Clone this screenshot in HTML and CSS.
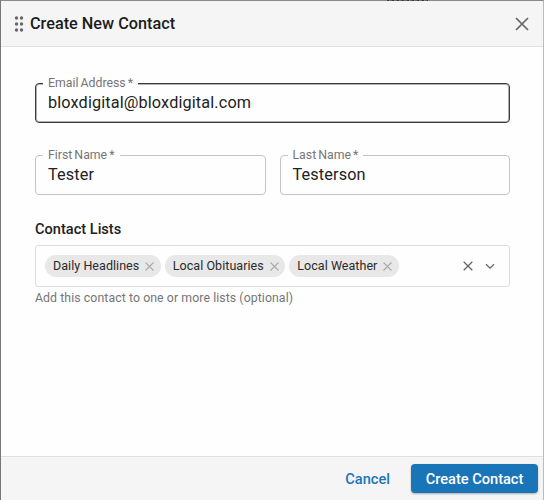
FILE: index.html
```html
<!DOCTYPE html>
<html lang="en">
<head>
<meta charset="utf-8">
<title>Create New Contact</title>
<link rel="stylesheet" href="styles.css">
</head>
<body>
<div class="backdrop-peek"></div>
<div class="dialog">
  <header class="header">
    <div class="title-group">
      <svg class="drag" width="10" height="16" viewBox="0 0 10 16"><g fill="#666"><circle cx="2.500" cy="2" r="1.700"/><circle cx="7.500" cy="2" r="1.700"/><circle cx="2.500" cy="8" r="1.700"/><circle cx="7.500" cy="8" r="1.700"/><circle cx="2.500" cy="14" r="1.700"/><circle cx="7.500" cy="14" r="1.700"/></g></svg>
      <h1 class="title">Create New Contact</h1>
    </div>
    <svg class="close" width="14" height="14" viewBox="0 0 14 14"><path d="M1 1L13 13M13 1L1 13" stroke="#666" stroke-width="1.7" fill="none"/></svg>
  </header>
  <main class="body">
    <div class="field focused">
      <span class="legend">Email Address *</span>
      <span class="value">bloxdigital@bloxdigital.com</span>
    </div>
    <div class="name-row">
      <div class="field">
        <span class="legend">First Name *</span>
        <span class="value">Tester</span>
      </div>
      <div class="field">
        <span class="legend">Last Name *</span>
        <span class="value">Testerson</span>
      </div>
    </div>
    <div class="section-label">Contact Lists</div>
    <div class="select">
      <div class="chips">
        <span class="chip">Daily Headlines<svg class="chip-x" width="9" height="9" viewBox="0 0 9 9"><path d="M.5 .5L8.500 8.500M8.500 .5L.5 8.500" stroke="#aaa" stroke-width="1.100" fill="none"/></svg></span>
        <span class="chip">Local Obituaries<svg class="chip-x" width="9" height="9" viewBox="0 0 9 9"><path d="M.5 .5L8.500 8.500M8.500 .5L.5 8.500" stroke="#aaa" stroke-width="1.100" fill="none"/></svg></span>
        <span class="chip">Local Weather<svg class="chip-x" width="9" height="9" viewBox="0 0 9 9"><path d="M.5 .5L8.500 8.500M8.500 .5L.5 8.500" stroke="#aaa" stroke-width="1.100" fill="none"/></svg></span>
      </div>
      <div class="select-icons">
        <svg width="10" height="10" viewBox="0 0 10 10"><path d="M.7 .7L9.300 9.300M9.300 .7L.7 9.300" stroke="#666" stroke-width="1.300" fill="none"/></svg>
        <svg width="10" height="7" viewBox="0 0 10 7"><path d="M1 1.200L5 5.200L9 1.200" stroke="#666" stroke-width="1.300" fill="none"/></svg>
      </div>
    </div>
    <div class="helper">Add this contact to one or more lists (optional)</div>
  </main>
  <footer class="footer">
    <button class="btn-text" type="button">Cancel</button>
    <button class="btn-primary" type="button">Create Contact</button>
  </footer>
</div>
</body>
</html>
```
FILE: styles.css
```css
* { box-sizing: border-box; }
html, body { margin: 0; height: 100%; }
body { font-family: Roboto, "Liberation Sans", sans-serif; background: #fff; overflow: hidden; }
.backdrop-peek {
  position: absolute; top: 0; left: 387px; z-index: 1;
  width: 41px; height: 1px;
  background: repeating-linear-gradient(90deg, #3a3a3a 0 2px, #8a7a6a 2px 3px, #5a6a7a 3px 5px);
}
.dialog {
  width: 544px; height: 500px;
  display: flex; flex-direction: column;
  background: #fefefe;
  border-left: 1px solid #777;
  border-top: 1px solid #8a8a8a;
  border-right: 1px solid #bbb;
}
.header {
  height: 46px; flex: none;
  display: flex; align-items: center; justify-content: space-between;
  padding: 0 14px 0 13px;
  background: #f5f5f5;
  border-bottom: 1px solid #e0e0e0;
}
.title-group { display: flex; align-items: center; gap: 6px; }
.title { margin: 0; font-size: 16.25px; font-weight: 500; color: #1c1c1c; line-height: 20px; }
.body { flex: 1; padding: 36px 33px 0 34px; display: flex; flex-direction: column; }
.field {
  position: relative;
  flex: 1;
  height: 40px;
  padding: 0 12px;
  display: flex; align-items: center;
  border: 1px solid #c4c4c4;
  border-radius: 4px;
  background: #fefefe;
}
.body > .field { flex: none; }
.focused { border-color: #3a3a3a; box-shadow: inset 0 0 0 1px rgba(0,0,0,.3); }
.legend {
  position: absolute; top: -8px; left: 7px;
  padding: 0 5px;
  background: #fefefe;
  font-size: 12.3px; line-height: 14px; color: #757575; word-spacing: -1px;
}
.value { font-size: 16.25px; color: #222; line-height: 20px; letter-spacing: .13px; }
.name-row { display: flex; gap: 14px; margin-top: 32px; }
.section-label { margin-top: 25px; font-size: 14.6px; font-weight: 500; line-height: 18px; color: #212121; }
.select {
  margin-top: 7px;
  height: 42px;
  display: flex; align-items: center; justify-content: space-between;
  padding: 0 14px 0 9px;
  border: 1px solid #dcdcdc;
  border-radius: 3px;
  background: #fefefe;
}
.chips { display: flex; gap: 4px; }
.chip {
  height: 22px;
  display: inline-flex; align-items: center; gap: 6px;
  padding: 0 6.5px 2px 8px;
  border-radius: 11px;
  background: #e8e8e8;
  font-size: 12.5px; color: #2a2a2a; letter-spacing: .05px;
}
.chip-x { margin-top: 2px; }
.select-icons { display: flex; align-items: center; gap: 12px; }
.helper { margin-top: 3px; font-size: 12.3px; line-height: 16px; color: #757575; letter-spacing: .08px; }
.footer {
  height: 44px; flex: none;
  display: flex; align-items: center; justify-content: flex-end; gap: 21px;
  padding: 0 5px 0 0;
  background: #f5f5f5;
  border-top: 1px solid #e0e0e0;
}
.btn-text, .btn-primary { font-family: inherit; font-size: 14.6px; font-weight: 500; border: 0; cursor: pointer; }
.btn-text { background: none; color: #1976b8; padding: 0; }
.btn-primary {
  width: 127px; height: 29px;
  background: #1a74b8; color: #fff;
  border-radius: 4px;
  box-shadow: 0 1px 2px rgba(0,0,0,.3);
  padding: 0;
}
```
